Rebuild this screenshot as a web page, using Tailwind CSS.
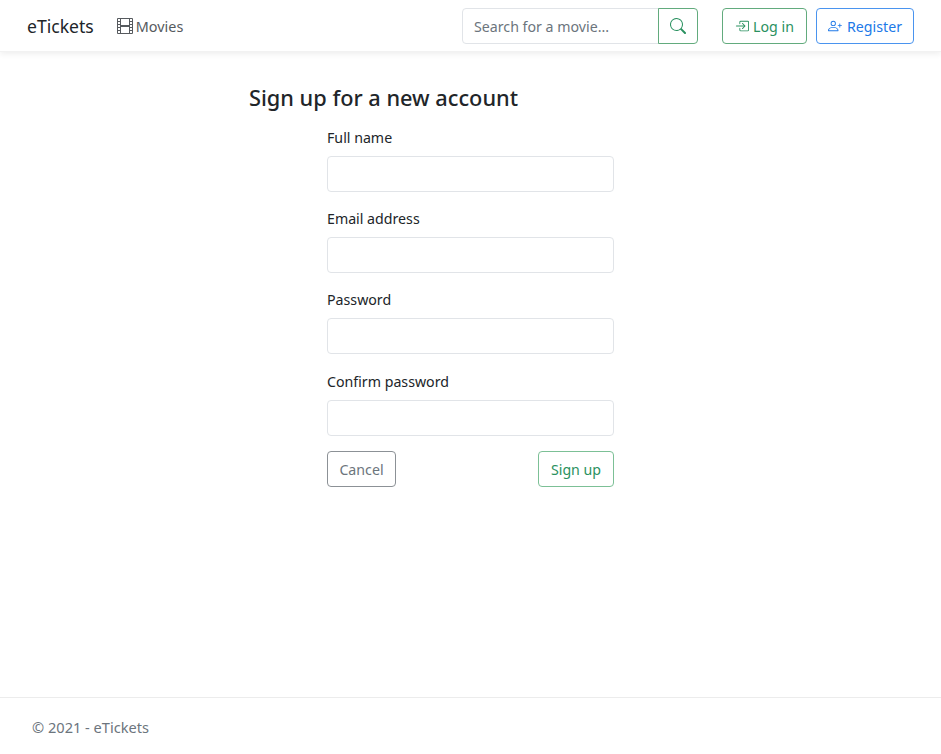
<!DOCTYPE html>
<html lang="en">
<head>
  <meta charset="UTF-8">
  <meta name="viewport" content="width=device-width, initial-scale=1.0" />
  <title>eTickets</title>
  <script src="https://cdn.jsdelivr.net/npm/@tailwindcss/browser@4"></script>
</head>
<body class="bg-white text-[#212529] font-['Noto_Sans',sans-serif] text-[14.2px] h-[754px] flex flex-col overflow-hidden">
  <nav class="h-[52px] shrink-0 flex items-center pl-[27px] pr-[27px] bg-white shadow-[0_2px_6px_rgba(0,0,0,0.07)] border-b border-[#f2f2f2]">
    <a class="text-[17.6px] mr-[23px] pt-px">eTickets</a>
    <a class="flex items-center gap-[3px] text-[#565a5e] text-[14.4px]">
      <svg class="w-4 h-4 mt-px" viewBox="0 0 16 16" fill="currentColor"><path d="M0 1a1 1 0 0 1 1-1h14a1 1 0 0 1 1 1v14a1 1 0 0 1-1 1H1a1 1 0 0 1-1-1V1zm4 0v6h8V1H4zm8 8H4v6h8V9zM1 1v2h2V1H1zm2 3H1v2h2V4zM1 7v2h2V7H1zm2 3H1v2h2v-2zm-2 3v2h2v-2H1zM15 1h-2v2h2V1zm-2 3v2h2V4h-2zm2 3h-2v2h2V7zm-2 3v2h2v-2h-2zm2 3h-2v2h2v-2z"/></svg>
      <span class="pt-[2px]">Movies</span>
    </a>
    <div class="ml-auto flex">
      <input type="text" placeholder="Search for a movie..." class="w-[197px] h-9 pl-[11px] pr-3 pt-[2px] border border-[#e1e4e8] rounded-l outline-none placeholder:text-[#6c757d]">
      <button class="w-[40px] h-9 flex items-center justify-center border border-[#62ab7d] rounded-r text-[#2a9160] -ml-px">
        <svg class="w-4 h-4" viewBox="0 0 16 16" fill="currentColor"><path d="M11.742 10.344a6.5 6.5 0 1 0-1.397 1.398h-.001c.03.04.062.078.098.115l3.85 3.85a1 1 0 0 0 1.415-1.414l-3.85-3.85a1.007 1.007 0 0 0-.115-.1zM12 6.5a5.5 5.5 0 1 1-11 0 5.5 5.5 0 0 1 11 0z"/></svg>
      </button>
    </div>
    <button class="ml-[24px] w-[85px] h-9 flex items-center justify-center gap-[4px] border border-[#62ab7d] rounded text-[#2a9160]">
      <svg class="w-[14px] h-[14px]" viewBox="0 0 16 16" fill="currentColor"><path d="M6 3.5a.5.5 0 0 1 .5-.5h8a.5.5 0 0 1 .5.5v9a.5.5 0 0 1-.5.5h-8a.5.5 0 0 1-.5-.5v-2a.5.5 0 0 0-1 0v2A1.5 1.5 0 0 0 6.5 14h8a1.5 1.5 0 0 0 1.5-1.5v-9A1.5 1.5 0 0 0 14.5 2h-8A1.5 1.5 0 0 0 5 3.5v2a.5.5 0 0 0 1 0v-2z"/><path d="M11.854 8.354a.5.5 0 0 0 0-.708l-3-3a.5.5 0 1 0-.708.708L10.293 7.5H1.5a.5.5 0 0 0 0 1h8.793l-2.147 2.146a.5.5 0 0 0 .708.708l3-3z"/></svg>
      <span class="pt-[2px]">Log in</span>
    </button>
    <button class="ml-[9px] w-[98px] h-9 flex items-center justify-center gap-[5px] border border-[#4a94ef] rounded text-[#2079e8]">
      <svg class="w-[14px] h-[14px]" viewBox="0 0 16 16" fill="currentColor"><path d="M6 8a3 3 0 1 0 0-6 3 3 0 0 0 0 6zm2-3a2 2 0 1 1-4 0 2 2 0 0 1 4 0zm4 8c0 1-1 1-1 1H1s-1 0-1-1 1-4 6-4 6 3 6 4zm-1-.004c-.001-.246-.154-.986-.832-1.664C9.516 10.68 8.289 10 6 10c-2.29 0-3.516.68-4.168 1.332-.678.678-.83 1.418-.832 1.664h10z"/><path d="M13.5 5a.5.5 0 0 1 .5.5V7h1.5a.5.5 0 0 1 0 1H14v1.5a.5.5 0 0 1-1 0V8h-1.5a.5.5 0 0 1 0-1H13V5.5a.5.5 0 0 1 .5-.5z"/></svg>
      <span class="pt-[2px]">Register</span>
    </button>
  </nav>

  <main class="flex-1 pl-[249px] pt-[31px]">
    <h4 class="text-[21.75px] leading-[29px] font-medium">Sign up for a new account</h4>
    <form class="ml-[78px] w-[287px] mt-[13px]">
      <div class="flex flex-col mb-[14px]">
        <label class="leading-[25px] mb-[6px]">Full name</label>
        <input type="text" class="h-9 px-3 border border-[#e1e4e8] rounded outline-none">
      </div>
      <div class="flex flex-col mb-[14px]">
        <label class="leading-[25px] mb-[6px]">Email address</label>
        <input type="email" class="h-9 px-3 border border-[#e1e4e8] rounded outline-none">
      </div>
      <div class="flex flex-col mb-[15px]">
        <label class="leading-[25px] mb-[6px]">Password</label>
        <input type="password" class="h-9 px-3 border border-[#e1e4e8] rounded outline-none">
      </div>
      <div class="flex flex-col mb-[15px]">
        <label class="leading-[25px] mb-[6px]">Confirm password</label>
        <input type="password" class="h-9 px-3 border border-[#e1e4e8] rounded outline-none">
      </div>
      <div class="flex justify-between">
        <button type="button" class="w-[69px] h-9 pt-[2px] border border-[#8c9196] rounded text-[#6c757d]">Cancel</button>
        <button type="button" class="w-[76px] h-9 pt-[2px] border border-[#7cc096] rounded text-[#2a9160]">Sign up</button>
      </div>
    </form>
  </main>

  <footer class="h-[57px] shrink-0 border-t border-[#ececec] pl-[32px] pt-[18px] text-[#6c757d] text-[14.6px] leading-[22px]">© 2021 - eTickets</footer>
</body>
</html>
